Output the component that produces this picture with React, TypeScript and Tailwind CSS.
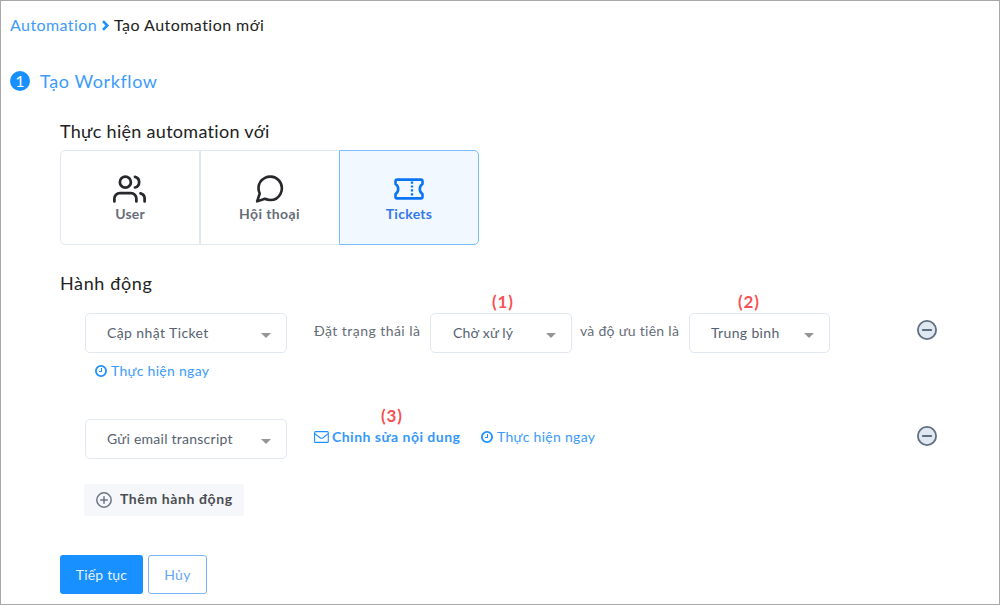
import type { ReactNode } from "react";

function UsersIcon() {
  return (
    <svg className="mr-px" width="33" height="34" viewBox="0 0 24 24" fill="none" stroke="#26282b" strokeWidth="2" strokeLinecap="round" strokeLinejoin="round">
      <path d="M17 21v-2a4 4 0 0 0-4-4H5a4 4 0 0 0-4 4v2" />
      <circle cx="9" cy="7" r="4" />
      <path d="M23 21v-2a4 4 0 0 0-3-3.87M16 3.13a4 4 0 0 1 0 7.75" />
    </svg>
  );
}

function MessageIcon() {
  return (
    <svg className="mr-0.5" width="33" height="34" viewBox="0 0 24 24" fill="none" stroke="#26282b" strokeWidth="1.9" strokeLinecap="round" strokeLinejoin="round">
      <path d="M21 11.5a8.38 8.38 0 0 1-.9 3.8 8.5 8.5 0 0 1-7.6 4.7 8.38 8.38 0 0 1-3.8-.9L3 21l1.9-5.7a8.38 8.38 0 0 1-.9-3.8 8.5 8.5 0 0 1 4.7-7.6 8.38 8.38 0 0 1 3.8-.9h.5a8.48 8.48 0 0 1 8 8v.5z" />
    </svg>
  );
}

function TicketIcon() {
  return (
    <svg width="34" height="34" viewBox="0 0 34 34" fill="none" stroke="#0b74f5" strokeWidth="2.6" strokeLinejoin="round">
      <path d="M5 7.600h24c1.100 0 1.500.6 1.500 1.600v2.700c-1.500 1-2.700 2.900-2.700 5.100s1.200 4.100 2.700 5.100v2.700c0 1-.4 1.600-1.500 1.600H5c-1.100 0-1.500-.6-1.500-1.600v-2.700c1.500-1 2.700-2.900 2.700-5.100s-1.200-4.100-2.700-5.100V9.200c0-1 .4-1.600 1.500-1.600z" />
      <path d="M20 9.500v16" strokeWidth="2.300" strokeDasharray="2.200 1.700" />
    </svg>
  );
}

function ClockIcon() {
  return (
    <svg className="shrink-0" width="12" height="12" viewBox="0 0 12 12" fill="none" stroke="#1e90ff">
      <circle cx="6" cy="6" r="5.100" strokeWidth="1.800" />
      <path d="M6.500 3v3.500H4" strokeWidth="1.100" />
    </svg>
  );
}

function MailIcon() {
  return (
    <svg className="shrink-0" width="15" height="12" viewBox="0 0 15 12" fill="none" stroke="#1e90ff" strokeWidth="1.100" strokeLinejoin="round">
      <rect x=".6" y=".6" width="13.700" height="10.800" rx="1" />
      <path d="M.8 2.600 6 6.700q1.500 1.100 3 0l5.200-4.100" />
    </svg>
  );
}

function MinusIcon() {
  return (
    <svg width="20" height="20" viewBox="0 0 20 20" fill="none" stroke="#5f6f80">
      <circle cx="10" cy="10" r="9.100" fill="#dfe8f0" strokeWidth="1.800" />
      <path d="M5.800 10h8.400" strokeWidth="2" strokeLinecap="round" />
    </svg>
  );
}

function PlusIcon() {
  return (
    <svg className="shrink-0" width="16" height="16" viewBox="0 0 16 16" fill="none" stroke="#6b7683" strokeWidth="1.500" strokeLinecap="round">
      <circle cx="8" cy="8" r="7.200" />
      <path d="M4.700 8h6.600M8 4.700v6.600" />
    </svg>
  );
}

function Select({ children, className }: { children: ReactNode; className: string }) {
  return (
    <div className={`flex h-10 shrink-0 items-center justify-between rounded-[5px] border border-[#e1e8f1] pr-[15px] text-[#566270] ${className}`}>
      {children}
      <svg className="mt-1" width="10" height="5" viewBox="0 0 10 5">
        <path d="M0 0h10L5 5z" fill="#969696" />
      </svg>
    </div>
  );
}

function RunNow() {
  return (
    <a className="flex items-center gap-1 text-[#3c9bfb]">
      <ClockIcon />
      <span className="tracking-[0.300px]">Thực hiện ngay</span>
    </a>
  );
}

function Marker({ children, className }: { children: ReactNode; className: string }) {
  return (
    <span className={`absolute -top-[21px] text-[17px] leading-5 font-bold tracking-[0.900px] text-[#f94f55] ${className}`}>
      {children}
    </span>
  );
}

export default function App() {
  return (
    <main className="h-[605px] w-[1000px] overflow-hidden border border-[#a8a8a8] bg-white pl-[9px] font-['Lato','Noto_Sans',sans-serif] text-[14px] leading-5 whitespace-nowrap text-[#666d78]">
      <nav className="mt-[14px] flex h-5 items-center text-[16px]">
        <a className="w-[87px] tracking-[0.420px] text-[#3c9bfb]">Automation</a>
        <svg className="mx-[4px] mt-px" width="9" height="11" viewBox="0 0 9 11" fill="none" stroke="#1e90ff" strokeWidth="2.600">
          <path d="m2 1.200 4.300 4.300L2 9.800" />
        </svg>
        <span className="tracking-[0.460px] text-[#222]">Tạo Automation mới</span>
      </nav>

      <header className="mt-9 flex h-5 items-center gap-[10px]">
        <span className="flex size-5 items-center justify-center rounded-full bg-[#1890ff] text-[16px] text-white">1</span>
        <h1 className="text-[18px] tracking-[0.600px] text-[#3c9bfb]">Tạo Workflow</h1>
      </header>

      <section className="ml-[50px]">
        <h2 className="mt-[30px] h-5 text-[18px] tracking-[0.300px] text-[#222]">Thực hiện automation với</h2>
        <div className="mt-[9px] flex h-[95px] w-[419px] text-center font-bold">
          <div className="flex w-[140px] flex-col items-center rounded-l-[5px] border border-[#e1e8f1] pt-[21px]">
            <UsersIcon />
            <span className="-mt-0.5 tracking-[0.200px]">User</span>
          </div>
          <div className="flex w-[139px] flex-col items-center border-y border-l border-[#e1e8f1] pt-[21px]">
            <MessageIcon />
            <span className="-mt-0.5 mr-px tracking-[0.400px]">Hội thoại</span>
          </div>
          <div className="flex w-[140px] flex-col items-center rounded-r-[5px] border border-[#79bdff] bg-[#f1f8ff] pt-[21px] text-[#3478ec]">
            <TicketIcon />
            <span className="-mt-0.5 tracking-[0.300px]">Tickets</span>
          </div>
        </div>

        <h2 className="mt-[28px] h-5 text-[18px] tracking-[0.630px] text-[#222]">Hành động</h2>

        <div className="mt-5 ml-[25px] flex h-[106px] w-[852px] items-start">
          <div className="w-[201px]">
            <Select className="w-[201.500px] pl-[21px] tracking-[0.400px]">Cập nhật Ticket</Select>
            <div className="mt-2 ml-[10px]"><RunNow /></div>
          </div>
          <span className="mt-2 ml-[28px] w-[116px] tracking-[0.450px]">Đặt trạng thái là</span>
          <div className="relative">
            <Marker className="left-[62px]">(1)</Marker>
            <Select className="w-[142px] pl-[22px] tracking-[0.200px]">Chờ xử lý</Select>
          </div>
          <span className="mt-2 ml-[8px] w-[109px] tracking-[0.280px]">và độ ưu tiên là</span>
          <div className="relative">
            <Marker className="left-[49px]">(2)</Marker>
            <Select className="w-[141px] pl-[21px] tracking-[0.350px]">Trung bình</Select>
          </div>
          <button className="mt-[7px] ml-auto"><MinusIcon /></button>
        </div>

        <div className="ml-[25px] flex h-[65px] w-[852px] items-start">
          <Select className="w-[201.500px] pl-[21px] tracking-[0.250px]">Gửi email transcript</Select>
          <a className="relative mt-2 ml-[27.500px] flex w-[167px] items-center gap-[3px] font-bold text-[#3598fa]">
            <MailIcon />
            <span className="tracking-[0.480px]">Chỉnh sửa nội dung</span>
            <Marker className="left-[67px]">(3)</Marker>
          </a>
          <div className="mt-2"><RunNow /></div>
          <button className="mt-[7px] ml-auto"><MinusIcon /></button>
        </div>

        <button className="ml-6 flex h-8 w-[160px] items-center gap-2 rounded-[3px] bg-[#f5f7fb] pl-3 font-bold text-[#4b4d51]">
          <PlusIcon />
          <span className="-mt-0.5 tracking-[0.600px]">Thêm hành động</span>
        </button>

        <div className="mt-[39px] flex gap-[5px]">
          <button className="h-[39px] w-[83px] rounded-[3px] bg-[#1890ff] tracking-[0.200px] text-[#e5f2ff]">Tiếp tục</button>
          <button className="h-[39px] w-[59px] rounded-[3px] border border-[#79b5fa] tracking-[0.300px] text-[#65a7f5]">Hủy</button>
        </div>
      </section>
    </main>
  );
}
